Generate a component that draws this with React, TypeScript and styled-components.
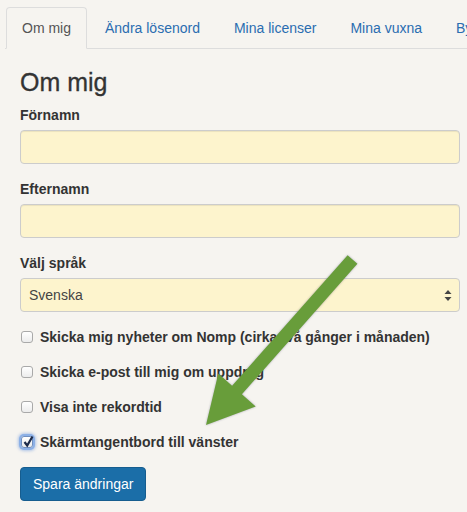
import React from "react";
import styled, { createGlobalStyle } from "styled-components";

const Global = createGlobalStyle`
  html, body { margin: 0; padding: 0; background: #f6f4f0; }
  body { font-family: "Liberation Sans", Arial, sans-serif; font-size: 14px; line-height: 20px; color: #333; }
  * { box-sizing: border-box; }
`;

const Page = styled.div`
  position: relative;
  width: 467px;
  height: 512px;
  overflow: hidden;
  padding-top: 7px;
`;

const TabBar = styled.ul`
  display: flex;
  list-style: none;
  margin: 0 0 0 5px;
  padding: 0 0 0 1px;
  border-bottom: 1px solid #ddd;
  white-space: nowrap;
`;

const Tab = styled.li<{ $active?: boolean }>`
  margin-right: 2px;
  margin-bottom: -1px;
  padding: 10px 15px;
  border: 1px solid ${(p) => (p.$active ? "#ddd" : "transparent")};
  border-bottom-color: ${(p) => (p.$active ? "#f6f4f0" : "transparent")};
  border-radius: 4px 4px 0 0;
  background: ${(p) => (p.$active ? "#f6f4f0" : "transparent")};
  color: ${(p) => (p.$active ? "#555" : "#2a6db0")};
  line-height: 20px;
  flex-shrink: 0;
`;

const Content = styled.div`
  padding: 0 7px 0 20px;
`;

const Heading = styled.h2`
  margin: 20px 0 10px;
  font-size: 25px;
  font-weight: 500;
  line-height: 26px;
  color: #333;
  -webkit-text-stroke: 0.3px #333;
`;

const Group = styled.div`
  margin-bottom: 15px;
`;

const Label = styled.label`
  display: block;
  margin-bottom: 5px;
  font-weight: bold;
  color: #333;
`;

const Input = styled.input`
  display: block;
  width: 100%;
  height: 34px;
  padding: 6px 12px;
  border: 1px solid #ccc;
  border-radius: 4px;
  background: #fdf4cd;
  font: inherit;
  color: #555;
  box-shadow: inset 0 1px 1px rgba(0, 0, 0, 0.075);
`;

const SelectWrap = styled.div`
  position: relative;
  width: 440px;
`;

const Select = styled.select`
  display: block;
  width: 100%;
  height: 34px;
  padding: 6px 8px;
  border: 1px solid #ccc;
  border-radius: 4px;
  background: #fdf4cd;
  font: inherit;
  color: #444;
  appearance: none;
  -webkit-appearance: none;
`;

const SelectIcon = styled.svg`
  position: absolute;
  right: 8px;
  top: 12px;
  pointer-events: none;
`;

const Checks = styled.div`
  display: flex;
  flex-direction: column;
  gap: 15px;
  margin-bottom: 15px;
`;

const CheckRow = styled.label`
  display: flex;
  align-items: center;
  gap: 7px;
  padding-left: 1px;
  font-weight: bold;
  color: #333;
  height: 20px;
`;

const Box = styled.span<{ $checked?: boolean }>`
  position: relative;
  width: 12px;
  height: 12px;
  border: 1px solid #a9a9a9;
  border-radius: 3px;
  background: linear-gradient(#ffffff, #ececec);
  box-shadow: ${(p) => (p.$checked ? "0 0 0 2px #8cb0e6, 0 0 3px 3px rgba(90,140,220,0.45)" : "none")};
  border-color: ${(p) => (p.$checked ? "#6f8fc0" : "#a9a9a9")};
  flex-shrink: 0;
`;

const Tick = styled.svg`
  position: absolute;
  left: 0px;
  top: -3px;
`;

const Button = styled.button`
  padding: 6px 12px;
  border: 1px solid #165d8f;
  border-radius: 4px;
  background: #1b6ea8;
  color: #fff;
  font: inherit;
  line-height: 20px;
`;

const Arrow = styled.svg`
  position: absolute;
  left: 0;
  top: 0;
  pointer-events: none;
  filter: drop-shadow(0 0 1px rgba(40, 40, 80, 0.35));
`;

const checks = [
  { text: "Skicka mig nyheter om Nomp (cirka två gånger i månaden)", checked: false },
  { text: "Skicka e-post till mig om uppdrag", checked: false },
  { text: "Visa inte rekordtid", checked: false },
  { text: "Skärmtangentbord till vänster", checked: true },
];

export default function App() {
  return (
    <Page>
      <Global />
      <TabBar>
        <Tab $active>Om mig</Tab>
        <Tab>Ändra lösenord</Tab>
        <Tab>Mina licenser</Tab>
        <Tab>Mina vuxna</Tab>
        <Tab>Byt</Tab>
      </TabBar>
      <Content>
        <Heading>Om mig</Heading>
        <Group>
          <Label>Förnamn</Label>
          <Input />
        </Group>
        <Group>
          <Label>Efternamn</Label>
          <Input />
        </Group>
        <Group>
          <Label>Välj språk</Label>
          <SelectWrap>
            <Select defaultValue="sv">
              <option value="sv">Svenska</option>
            </Select>
            <SelectIcon width="8" height="11" viewBox="0 0 8 11">
              <path d="M4 0 L7.5 4 L0.5 4 Z M4 11 L7.5 7 L0.5 7 Z" fill="#444" />
            </SelectIcon>
          </SelectWrap>
        </Group>
        <Checks>
          {checks.map((c) => (
            <CheckRow key={c.text}>
              <Box $checked={c.checked}>
                {c.checked && (
                  <Tick width="13" height="14" viewBox="0 0 13 14">
                    <path d="M2.5 8 L5.2 11.5 L10.5 2.5" stroke="#1d2b4a" strokeWidth="2.2" fill="none" />
                  </Tick>
                )}
              </Box>
              {c.text}
            </CheckRow>
          ))}
        </Checks>
        <Button>Spara ändringar</Button>
      </Content>
      <Arrow width="467" height="512" viewBox="0 0 467 512">
        <polygon
          points="357.4,263.8 241.9,394.3 255.7,406.6 206,425 218.3,373.4 232.1,385.7 347.6,255.2"
          fill="#689d3a"
        />
      </Arrow>
    </Page>
  );
}
